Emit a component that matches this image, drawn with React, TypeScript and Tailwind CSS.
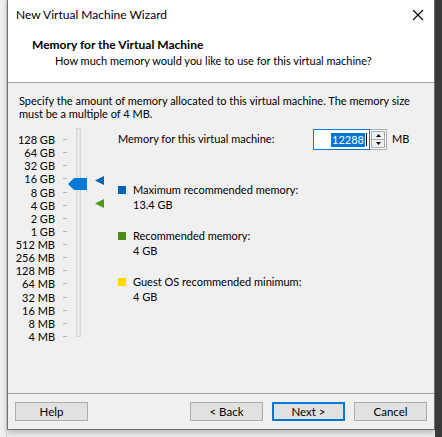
import React from "react";

const sizes = [
  "128 GB",
  "64 GB",
  "32 GB",
  "16 GB",
  "8 GB",
  "4 GB",
  "2 GB",
  "1 GB",
  "512 MB",
  "256 MB",
  "128 MB",
  "64 MB",
  "32 MB",
  "16 MB",
  "8 MB",
  "4 MB",
];

function WinButton({ label, focused }: { label: string; focused?: boolean }) {
  return (
    <button
      className={`h-[19px] w-[73px] bg-[#e1e1e1] text-[11.5px] leading-none text-black ${
        focused ? "border-2 border-[#0078d7]" : "border border-[#adadad]"
      }`}
    >
      {label}
    </button>
  );
}

function LegendItem({ color, label, value }: { color: string; label: string; value: string }) {
  return (
    <div className="flex gap-[7px]">
      <div className={`mt-[4px] h-[8px] w-[8px] ${color}`} />
      <div className="leading-[15px]">
        <div>{label}</div>
        <div>{value}</div>
      </div>
    </div>
  );
}

export default function App() {
  return (
    <div
      className="flex h-[437px] w-[442px] overflow-hidden bg-[#ececec] text-[11px] text-black"
      style={{ fontFamily: '"Segoe UI", Lato, "Noto Sans", sans-serif' }}
    >
      {/* desktop strip left */}
      <div className="h-full w-[7px] border-r border-[#d9d9d9] bg-[#f0f0f0]" />

      {/* wizard window */}
      <div className="flex h-[430px] w-[428px] flex-col border border-t-0 border-[#707070] bg-[#f0f0f0] shadow-[0_2px_6px_rgba(0,0,0,0.25)]">
        {/* title + header */}
        <div className="h-[82px] bg-white">
          <div className="flex h-[30px] items-center justify-between pl-[8px] pr-[8px]">
            <span className="text-[12px]">New Virtual Machine Wizard</span>
            <svg width="12" height="12" viewBox="0 0 12 12" className="mr-[2px]">
              <path d="M1 1 L11 11 M11 1 L1 11" stroke="#000" strokeWidth="1.1" />
            </svg>
          </div>
          <div className="pl-[24px] pt-[7px] text-[12px] font-bold leading-[16px]">Memory for the Virtual Machine</div>
          <div className="pl-[47px] leading-[16px]">How much memory would you like to use for this virtual machine?</div>
        </div>
        <div className="h-px bg-[#a0a0a0]" />

        {/* body */}
        <div className="flex-1 px-[11px] pt-[11px]">
          <p className="leading-[13px]">
            Specify the amount of memory allocated to this virtual machine. The memory size must be a multiple of 4 MB.
          </p>

          <div className="mt-[13px] flex">
            {/* slider */}
            <div className="relative flex h-[210px] w-[99px]">
              <div className="flex w-[36px] shrink-0 flex-col">
                {sizes.map((s) => (
                  <div key={s} className="flex h-[13.125px] items-center justify-end whitespace-nowrap leading-none">
                    {s}
                  </div>
                ))}
              </div>
              <div className="ml-[8px] flex flex-col">
                {sizes.map((s) => (
                  <div key={s} className="flex h-[13.125px] items-center">
                    <div className="h-px w-[4px] bg-[#b5b5b5]" />
                  </div>
                ))}
              </div>
              <div className="-mt-[5px] ml-[9px] h-[209px] w-[5px] border border-[#d6d6d6] bg-[#e7e7e7]" />
              {/* thumb */}
              <svg className="absolute left-[49px] top-[45px]" width="20" height="12" viewBox="0 0 20 12">
                <path d="M0 6 L6 0 L19 0 L19 12 L6 12 Z" fill="#0078d7" />
              </svg>
              {/* max recommended marker */}
              <svg className="absolute left-[76px] top-[43px]" width="9" height="9" viewBox="0 0 9 9">
                <path d="M0 4.5 L9 0 L9 9 Z" fill="#0063b1" />
              </svg>
              {/* recommended marker */}
              <svg className="absolute left-[76px] top-[66px]" width="9" height="9" viewBox="0 0 9 9">
                <path d="M0 4.5 L9 0 L9 9 Z" fill="#4e9a1c" />
              </svg>
            </div>

            {/* right side */}
            <div className="flex-1">
              <div className="-mt-[4px] flex items-center">
                <span className="w-[195px]">Memory for this virtual machine:</span>
                <div className="flex h-[21px] w-[57px] items-center justify-end border border-[#0078d7] bg-white pr-[2px]">
                  <span className="bg-[#0078d7] px-[1px] leading-[14px] text-white">12288</span>
                  <span className="ml-px h-[13px] w-px bg-black" />
                </div>
                <div className="flex h-[21px] w-[17px] flex-col border border-l-0 border-[#adadad] bg-white p-px">
                  <div className="flex flex-1 items-center justify-center border border-[#adadad] bg-[#f0f0f0]">
                    <svg width="5" height="3" viewBox="0 0 5 3">
                      <path d="M0 3 L2.5 0 L5 3 Z" fill="#000" />
                    </svg>
                  </div>
                  <div className="flex flex-1 items-center justify-center border border-t-0 border-[#adadad] bg-[#f0f0f0]">
                    <svg width="5" height="3" viewBox="0 0 5 3">
                      <path d="M0 0 L5 0 L2.5 3 Z" fill="#000" />
                    </svg>
                  </div>
                </div>
                <span className="ml-[5px]">MB</span>
              </div>

              <div className="mt-[32px] flex flex-col gap-[16px]">
                <LegendItem color="bg-[#0063b1]" label="Maximum recommended memory:" value="13.4 GB" />
                <LegendItem color="bg-[#4a8f1a]" label="Recommended memory:" value="4 GB" />
                <LegendItem color="bg-[#ffd800]" label="Guest OS recommended minimum:" value="4 GB" />
              </div>
            </div>
          </div>
        </div>

        {/* footer */}
        <div className="h-px bg-[#a0a0a0]" />
        <div className="flex h-[35px] items-center px-[7px]">
          <WinButton label="Help" />
          <div className="flex-1" />
          <div className="flex gap-[9px]">
            <WinButton label="< Back" />
            <WinButton label="Next >" focused />
            <WinButton label="Cancel" />
          </div>
        </div>
      </div>

      {/* desktop strip right */}
      <div className="h-full flex-1 bg-[#3a3a3a]" />
    </div>
  );
}
